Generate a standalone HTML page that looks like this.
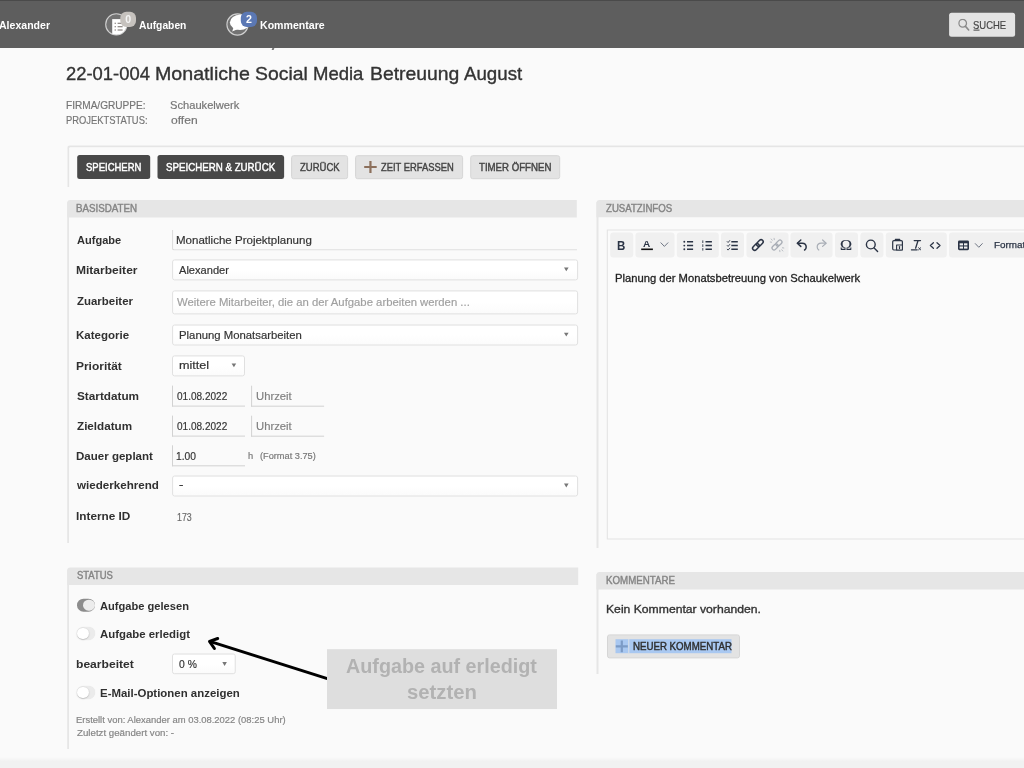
<!DOCTYPE html>
<html lang="de">
<head>
<meta charset="utf-8">
<title>Aufgabe bearbeiten</title>
<style>
html,body{margin:0;padding:0}
body{width:1024px;height:768px;overflow:hidden;position:relative;background:#fafafa;font-family:"Liberation Sans",sans-serif;color:#333}
h1{margin:0;font-weight:400;font-size:18.6px}
.t{position:absolute;white-space:nowrap;line-height:normal;transform-origin:0 0;display:block}
.abs{position:absolute}
#topbar{position:absolute;left:0;top:0;width:1024px;height:47.5px;background:#5e5e5e;box-shadow:inset 0 1px 0 #4a4a4a}
.hdr{position:absolute;background:#e6e6e6}
.vline{position:absolute;background:#e6e6e6}
.btn{position:absolute;box-sizing:border-box;border-radius:2px}
.btn.dark{background:#484848;border-radius:2.5px}
.btn.light{background:#e3e3e3;border:1px solid #d6d6d6;border-radius:2.5px}
.sel{position:absolute;box-sizing:border-box;background:linear-gradient(#fff,#fff 50%,#fbfbfb);border:1px solid #e0e0e0;border-radius:2.5px}
.inp{position:absolute;box-sizing:border-box;border-left:1px solid #d2d2d2;border-bottom:1px solid #d2d2d2}
.tri{position:absolute;width:0;height:0;border-left:2.3px solid transparent;border-right:2.3px solid transparent;border-top:3.7px solid #7a7a7a}
.tog{position:absolute;border-radius:6.5px;box-sizing:border-box}
.tog.on{background:#8c8c8c}
.tog.off{background:#ebebeb;box-shadow:0 0 1px rgba(0,0,0,.12)}
.tog i{position:absolute;top:0.7px;width:11.6px;height:11.6px;border-radius:50%;background:#fff;box-shadow:0 0.5px 1.5px rgba(0,0,0,.3)}
.tog.on i{right:0.6px;background:#ececec;box-shadow:none}
.tog.off i{left:0.4px}
.grp{position:absolute;background:#f0f0f0;border-radius:3px}
#app{position:absolute;left:0;top:0;width:1024px;height:768px;overflow:hidden;will-change:transform}

</style>
</head>
<body>
<div id="app">
<header id="topbar">
<span class="t" style="left:-1.48px;top:18.00px;font-size:11.8px;font-weight:700;color:#fff;transform:scaleX(0.8945)">Alexander</span>
<svg class="abs" style="left:100px;top:4px" width="48" height="40" viewBox="100 4 48 40">
<defs><clipPath id="c1"><circle cx="116.3" cy="24.4" r="10.4"/></clipPath></defs>
<circle cx="116.3" cy="24.4" r="10.6" fill="#737373" stroke="#cfcfcf" stroke-width="1.1"/>
<g clip-path="url(#c1)"><rect x="112.2" y="19.1" width="16" height="20" fill="#fff"/>
<g fill="#8a8480"><rect x="114.6" y="22.7" width="1.3" height="1.2"/><rect x="117.6" y="22.7" width="5" height="1.2"/>
<rect x="114.6" y="26.1" width="1.3" height="1.2"/><rect x="117.6" y="26.1" width="5" height="1.2"/>
<rect x="114.6" y="29.4" width="1.3" height="1.2"/><rect x="117.6" y="29.4" width="5" height="1.2"/></g></g>
<rect x="120.3" y="11.8" width="15.7" height="15.1" rx="6" fill="#c6c2be"/>
<text x="128.1" y="23" font-size="10.6" font-weight="700" fill="#f4f4f4" text-anchor="middle" font-family="Liberation Sans, sans-serif">0</text>
</svg>
<span class="t" style="left:138.94px;top:18.00px;font-size:11.8px;font-weight:700;color:#fff;transform:scaleX(0.8712)">Aufgaben</span>
<svg class="abs" style="left:220px;top:4px" width="48" height="40" viewBox="220 4 48 40">
<defs><clipPath id="c2"><circle cx="237.5" cy="24.5" r="10.4"/></clipPath></defs>
<circle cx="237.5" cy="24.5" r="10.6" fill="#737373" stroke="#cfcfcf" stroke-width="1.1"/>
<g clip-path="url(#c2)" fill="#fff"><ellipse cx="240" cy="22.4" rx="10.1" ry="7.7"/><path d="M233.5 27.5 L232.2 31.6 L238 29 Z"/></g>
<rect x="240.8" y="11.8" width="16.2" height="15.2" rx="6" fill="#5b78b4"/>
<text x="248.9" y="23" font-size="10.6" font-weight="700" fill="#fff" text-anchor="middle" font-family="Liberation Sans, sans-serif">2</text>
</svg>
<span class="t" style="left:260.00px;top:18.00px;font-size:11.8px;font-weight:700;color:#fff;transform:scaleX(0.8978)">Kommentare</span>
<div class="btn" style="left:949px;top:12px;width:66px;height:24px;transform:translate(0.1px,0.65px);background:#e4e4e4;border-radius:2.5px"><svg class="abs" style="left:9px;top:6px" width="12" height="13" viewBox="0 0 12 13"><circle cx="4.6" cy="4.6" r="3.8" fill="none" stroke="#8a8a8a" stroke-width="1.3"/><path d="M7.4 7.7 L10.6 11.3" stroke="#8a8a8a" stroke-width="1.6" stroke-linecap="round"/></svg></div>
<span class="t" style="left:972.56px;top:19.00px;font-size:11px;font-weight:400;color:#444;transform:scaleX(0.8604);-webkit-text-stroke:0.18px">SUCHE</span>
<div class="abs" style="left:973px;top:29px;width:6px;height:1px;transform:translate(0.5px,0.6px);background:#444"></div>
</header>
<div class="abs" style="left:271.6px;top:47.5px;width:1.6px;height:2px;background:#777;transform:skewX(-20deg)"></div>
<main>
<h1>
<span class="t" style="left:65.94px;top:63.00px;font-size:18.6px;font-weight:400;color:#333;transform:scaleX(0.9897);-webkit-text-stroke:0.35px #333">22-01-004 </span>
<span class="t" style="left:154.52px;top:63.00px;font-size:18.6px;font-weight:400;color:#333;transform:scaleX(1.0558);-webkit-text-stroke:0.35px #333">Monatliche </span>
<span class="t" style="left:254.51px;top:63.00px;font-size:18.6px;font-weight:400;color:#333;transform:scaleX(1.0419);-webkit-text-stroke:0.35px #333">Social </span>
<span class="t" style="left:312.53px;top:63.00px;font-size:18.6px;font-weight:400;color:#333;transform:scaleX(0.9953);-webkit-text-stroke:0.35px #333">Media </span>
<span class="t" style="left:369.62px;top:63.00px;font-size:18.6px;font-weight:400;color:#333;transform:scaleX(1.0415);-webkit-text-stroke:0.35px #333">Betreuung </span>
<span class="t" style="left:463.52px;top:63.00px;font-size:18.6px;font-weight:400;color:#333;transform:scaleX(1.0047);-webkit-text-stroke:0.35px #333">August</span>
</h1>
<span class="t" style="left:65.94px;top:99.00px;font-size:10.7px;font-weight:400;color:#757575;transform:scaleX(0.9430);-webkit-text-stroke:0.18px">FIRMA/GRUPPE:</span>
<span class="t" style="left:170.35px;top:99.00px;font-size:10.9px;font-weight:400;color:#757575;transform:scaleX(1.0227);-webkit-text-stroke:0.18px">Schaukelwerk</span>
<span class="t" style="left:66.06px;top:114.00px;font-size:10.7px;font-weight:400;color:#757575;transform:scaleX(0.8781);-webkit-text-stroke:0.18px">PROJEKTSTATUS:</span>
<span class="t" style="left:170.55px;top:114.00px;font-size:10.9px;font-weight:400;color:#757575;transform:scaleX(1.1088);-webkit-text-stroke:0.18px">offen</span>
<div class="abs" style="left:67px;top:145px;width:960px;height:42px;transform:translate(0.2px,0.2px);border-left:2px solid #e5e5e5;border-top:2px solid #e5e5e5;box-sizing:border-box;border-radius:3px 0 0 0"></div>
<div class="btn dark" style="left:77px;top:155px;width:73px;height:24px;transform:translate(0.2px,0.1px)"></div>
<span class="t" style="left:85.58px;top:161.00px;font-size:10.8px;font-weight:400;color:#fff;transform:scaleX(0.8790);-webkit-text-stroke:0.45px">SPEICHERN</span>
<div class="btn dark" style="left:157px;top:155px;width:127px;height:24px;transform:translate(0.5px,0.1px);transform-origin:0 0;transform:translate(0.5px,0.1px) scaleX(0.997)"></div>
<span class="t" style="left:165.54px;top:161.00px;font-size:10.8px;font-weight:400;color:#fff;transform:scaleX(0.9008);-webkit-text-stroke:0.45px">SPEICHERN &amp; ZURÜCK</span>
<div class="btn light" style="left:291px;top:155px;width:57px;height:24px;transform:translate(0.1px,0.2px)"></div>
<span class="t" style="left:299.68px;top:161.00px;font-size:10.8px;font-weight:400;color:#444;transform:scaleX(0.8807);-webkit-text-stroke:0.42px">ZURÜCK</span>
<div class="btn light" style="left:355px;top:155px;width:108px;height:24px;transform:translate(0.1px,0.2px)"></div>
<svg class="abs" style="left:364px;top:160px" width="14" height="14" viewBox="364 160 14 14"><path d="M370.45 161V173M364.2 167H376.7" stroke="#8c705c" stroke-width="2.2"/></svg>
<span class="t" style="left:380.67px;top:161.00px;font-size:10.8px;font-weight:400;color:#444;transform:scaleX(0.8675);-webkit-text-stroke:0.42px">ZEIT ERFASSEN</span>
<div class="btn light" style="left:470px;top:155px;width:90px;height:24px;transform:translate(0.2px,0.2px)"></div>
<span class="t" style="left:478.50px;top:161.00px;font-size:10.8px;font-weight:400;color:#444;transform:scaleX(0.8942);-webkit-text-stroke:0.42px">TIMER ÖFFNEN</span>
<section>
<div class="hdr" style="left:67px;top:200px;width:510px;height:17px;transform:translate(0.2px,0px);border-radius:3px 0 0 0;transform-origin:0 0;transform:translate(0.2px,0px) scale(0.9992,1.0235)"></div>
<div class="vline" style="left:67px;top:202px;width:2px;height:341px;transform:translate(0.2px,0px);transform-origin:0 0;transform:translate(0.2px,0px) scaleX(0.9)"></div>
<span class="t" style="left:76.14px;top:202.00px;font-size:10.6px;font-weight:400;color:#858585;transform:scaleX(0.9219);-webkit-text-stroke:0.42px">BASISDATEN</span>
<span class="t" style="left:76.62px;top:233.00px;font-size:11.8px;font-weight:700;color:#303030;transform:scaleX(0.9358)">Aufgabe</span>
<div class="inp" style="left:172px;top:229px;width:405px;height:21px;transform:translate(0.1px,0.6px);border-radius:0 0 0 2px"></div>
<span class="t" style="left:175.54px;top:234.00px;font-size:11.1px;font-weight:400;color:#333;transform:scaleX(1.0390);-webkit-text-stroke:0.18px">Monatliche Projektplanung</span>
<span class="t" style="left:75.79px;top:263.00px;font-size:11.8px;font-weight:700;color:#303030;transform:scaleX(1.0198)">Mitarbeiter</span>
<div class="sel" style="left:172px;top:259px;width:405.5px;height:21px;transform:translate(0.1px,0.4px)"></div>
<span class="t" style="left:178.91px;top:264.00px;font-size:11.1px;font-weight:400;color:#333;transform:scaleX(1.0001);-webkit-text-stroke:0.18px">Alexander</span>
<svg class="abs" style="left:564px;top:267px" width="8" height="8" viewBox="0 0 8 8"><path d="M0.00 0.50 h4.6 l-2.3 3.8z" fill="#777"/></svg>
<span class="t" style="left:76.64px;top:294.00px;font-size:11.8px;font-weight:700;color:#303030;transform:scaleX(0.9699)">Zuarbeiter</span>
<div class="sel" style="left:172px;top:290px;width:405.5px;height:24px;transform:translate(0.1px,0.4px)"></div>
<span class="t" style="left:176.51px;top:296.00px;font-size:11.1px;font-weight:400;color:#a0a0a0;transform:scaleX(1.0195);-webkit-text-stroke:0.18px">Weitere Mitarbeiter, die an der Aufgabe arbeiten werden ...</span>
<span class="t" style="left:75.80px;top:328.00px;font-size:11.8px;font-weight:700;color:#303030;transform:scaleX(0.9762)">Kategorie</span>
<div class="sel" style="left:172px;top:324px;width:405.5px;height:21px;transform:translate(0.1px,0.5px)"></div>
<span class="t" style="left:178.93px;top:329.00px;font-size:11.1px;font-weight:400;color:#333;transform:scaleX(1.0214);-webkit-text-stroke:0.18px">Planung Monatsarbeiten</span>
<svg class="abs" style="left:564px;top:332px" width="8" height="8" viewBox="0 0 8 8"><path d="M0.00 0.80 h4.6 l-2.3 3.8z" fill="#777"/></svg>
<span class="t" style="left:75.79px;top:359.00px;font-size:11.8px;font-weight:700;color:#303030;transform:scaleX(1.0130)">Priorität</span>
<div class="sel" style="left:172px;top:355px;width:73px;height:21px;transform:translate(0px,0.4px)"></div>
<span class="t" style="left:178.53px;top:359.00px;font-size:11.1px;font-weight:400;color:#333;transform:scaleX(1.1369);-webkit-text-stroke:0.18px">mittel</span>
<svg class="abs" style="left:231px;top:363px" width="8" height="8" viewBox="0 0 8 8"><path d="M0.60 0.40 h4.6 l-2.3 3.8z" fill="#777"/></svg>
<span class="t" style="left:76.52px;top:389.00px;font-size:11.8px;font-weight:700;color:#303030;transform:scaleX(0.9968)">Startdatum</span>
<div class="inp" style="left:172px;top:386px;width:73px;height:21px;transform:translate(0px,-0.4px)"></div>
<span class="t" style="left:176.66px;top:390.00px;font-size:11px;font-weight:400;color:#333;transform:scaleX(0.9122);-webkit-text-stroke:0.18px">01.08.2022</span>
<div class="inp" style="left:251px;top:386px;width:73px;height:21px;transform:translate(0.1px,0px);transform:translate(0.1px,-0.3px)"></div>
<span class="t" style="left:255.61px;top:390.00px;font-size:11.1px;font-weight:400;color:#808080;transform:scaleX(1.0168);-webkit-text-stroke:0.18px">Uhrzeit</span>
<span class="t" style="left:76.64px;top:419.00px;font-size:11.8px;font-weight:700;color:#303030;transform:scaleX(0.9894)">Zieldatum</span>
<div class="inp" style="left:172px;top:416px;width:73px;height:21px;transform:translate(0px,-0.4px)"></div>
<span class="t" style="left:176.66px;top:420.00px;font-size:11px;font-weight:400;color:#333;transform:scaleX(0.9122);-webkit-text-stroke:0.18px">01.08.2022</span>
<div class="inp" style="left:251px;top:416px;width:73px;height:21px;transform:translate(0.1px,0px);transform:translate(0.1px,-0.3px)"></div>
<span class="t" style="left:255.61px;top:420.00px;font-size:11.1px;font-weight:400;color:#808080;transform:scaleX(1.0168);-webkit-text-stroke:0.18px">Uhrzeit</span>
<span class="t" style="left:75.80px;top:449.00px;font-size:11.8px;font-weight:700;color:#303030;transform:scaleX(0.9780)">Dauer geplant</span>
<div class="inp" style="left:172px;top:445px;width:73px;height:21px;transform:translate(0px,0.3px)"></div>
<span class="t" style="left:175.56px;top:450.00px;font-size:11px;font-weight:400;color:#333;transform:scaleX(0.9328);-webkit-text-stroke:0.18px">1.00</span>
<span class="t" style="left:247.52px;top:450.00px;font-size:9.7px;font-weight:400;color:#777;transform:scaleX(0.9592);-webkit-text-stroke:0.18px">h</span>
<span class="t" style="left:260.03px;top:450.00px;font-size:9.7px;font-weight:400;color:#777;transform:scaleX(0.9499);-webkit-text-stroke:0.18px">(Format 3.75)</span>
<span class="t" style="left:76.50px;top:478.00px;font-size:11.8px;font-weight:700;color:#303030;transform:scaleX(0.9837)">wiederkehrend</span>
<div class="sel" style="left:172px;top:475px;width:405.5px;height:21px;transform:translate(0.1px,0.5px)"></div>
<span class="t" style="left:178.89px;top:478.00px;font-size:11.4px;font-weight:400;color:#333;transform:scaleX(1.1542);-webkit-text-stroke:0.25px">-</span>
<svg class="abs" style="left:564px;top:483px" width="8" height="8" viewBox="0 0 8 8"><path d="M0.00 0.60 h4.6 l-2.3 3.8z" fill="#777"/></svg>
<span class="t" style="left:75.79px;top:509.00px;font-size:11.8px;font-weight:700;color:#303030;transform:scaleX(0.9987)">Interne ID</span>
<span class="t" style="left:176.62px;top:511.00px;font-size:11px;font-weight:400;color:#6a6a6a;transform:scaleX(0.8033);-webkit-text-stroke:0.18px">173</span>
</section>
<section>
<div class="hdr" style="left:67px;top:567px;width:511px;height:18px;transform:translate(0.2px,0.5px);border-radius:3px 0 0 0;transform-origin:0 0;transform:translate(0.2px,0.5px) scaleY(0.97)"></div>
<div class="vline" style="left:67px;top:570px;width:2px;height:179px;transform:translate(0.2px,0px);transform-origin:0 0;transform:translate(0.2px,0px) scaleX(0.9)"></div>
<span class="t" style="left:76.52px;top:569.00px;font-size:10.6px;font-weight:400;color:#858585;transform:scaleX(0.8917);-webkit-text-stroke:0.42px">STATUS</span>
<div class="tog on" style="left:77px;top:598px;width:18.3px;height:13px;transform:translate(0px,0.7px)"><i></i></div>
<span class="t" style="left:99.82px;top:599.00px;font-size:11.8px;font-weight:700;color:#303030;transform:scaleX(0.9422)">Aufgabe gelesen</span>
<div class="tog off" style="left:77px;top:626px;width:18.3px;height:13px;transform:translate(0px,0.9px)"><i></i></div>
<span class="t" style="left:99.82px;top:627.00px;font-size:11.8px;font-weight:700;color:#303030;transform:scaleX(0.9662)">Aufgabe erledigt</span>
<span class="t" style="left:75.70px;top:657.00px;font-size:11.8px;font-weight:700;color:#303030;transform:scaleX(1.0254)">bearbeitet</span>
<div class="sel" style="left:172px;top:653px;width:64px;height:21px;transform:translate(0px,0.5px);transform-origin:0 0;transform:translate(0px,0.5px) scale(0.996,0.985)"></div>
<span class="t" style="left:178.64px;top:658.00px;font-size:11.1px;font-weight:400;color:#333;transform:scaleX(0.9323);-webkit-text-stroke:0.18px">0 %</span>
<svg class="abs" style="left:222px;top:662px" width="8" height="8" viewBox="0 0 8 8"><path d="M0.30 0.10 h4.6 l-2.3 3.8z" fill="#777"/></svg>
<div class="tog off" style="left:77px;top:685px;width:18.3px;height:13px;transform:translate(0px,0.9px)"><i></i></div>
<span class="t" style="left:99.60px;top:686.00px;font-size:11.8px;font-weight:700;color:#303030;transform:scaleX(0.9695)">E-Mail-Optionen anzeigen</span>
<span class="t" style="left:76.12px;top:714.00px;font-size:9.4px;font-weight:400;color:#858585;transform:scaleX(1.0058);-webkit-text-stroke:0.18px">Erstellt von: Alexander am 03.08.2022 (08:25 Uhr)</span>
<span class="t" style="left:76.56px;top:727.00px;font-size:9.4px;font-weight:400;color:#858585;transform:scaleX(1.0351);-webkit-text-stroke:0.18px">Zuletzt geändert von: -</span>
</section>
<svg class="abs" style="left:200px;top:630px" width="140" height="60" viewBox="200 630 140 60"><g fill="none" stroke="#000" stroke-width="3" stroke-linecap="butt" stroke-linejoin="round"><path d="M327.3 678.6 L209.8 641.4"/><path d="M217.7 638.5 L209.5 641.3 L214.4 648.5" stroke-linecap="round"/></g></svg>
<div class="abs" style="left:327px;top:649px;width:230px;height:60px;transform:translate(0px,0.2px);background:#dedede"></div>
<span class="t" style="left:345.91px;top:655.00px;font-size:20px;font-weight:700;color:#b2b2b2;transform:scaleX(0.9869)">Aufgabe auf erledigt</span>
<span class="t" style="left:406.50px;top:681.00px;font-size:20px;font-weight:700;color:#b2b2b2;transform:scaleX(1.0142)">setzten</span>
<section>
<div class="hdr" style="left:596px;top:199px;width:430px;height:17px;transform:translate(0.5px,0.9px);border-radius:3px 0 0 0;transform-origin:0 0;transform:translate(0.5px,0.9px) scaleY(1.0235)"></div>
<div class="vline" style="left:596px;top:202px;width:2px;height:345.5px;transform:translate(0.5px,0px)"></div>
<span class="t" style="left:605.67px;top:202.00px;font-size:10.6px;font-weight:400;color:#858585;transform:scaleX(0.9087);-webkit-text-stroke:0.42px">ZUSATZINFOS</span>
<div class="abs" style="left:606px;top:229px;width:430px;height:310px;transform:translate(0.8px,0.5px);box-sizing:border-box;border:1px solid #e3e3e3;background:#fbfbfb"></div>
<div class="grp" style="left:610px;top:232px;width:23px;height:25px;transform:translate(0.2px,0.6px)"></div>
<div class="grp" style="left:635px;top:232px;width:39px;height:25px;transform:translate(0.5px,0.6px)"></div>
<div class="grp" style="left:676px;top:232px;width:42px;height:25px;transform:translate(0.8px,0.6px)"></div>
<div class="grp" style="left:721px;top:232px;width:23px;height:25px;transform:translate(0px,0.6px)"></div>
<div class="grp" style="left:746px;top:232px;width:42px;height:25px;transform:translate(0.5px,0.6px)"></div>
<div class="grp" style="left:790px;top:232px;width:42px;height:25px;transform:translate(0.5px,0.6px)"></div>
<div class="grp" style="left:835px;top:232px;width:23px;height:25px;transform:translate(0px,0.6px)"></div>
<div class="grp" style="left:860px;top:232px;width:23px;height:25px;transform:translate(0.4px,0.6px)"></div>
<div class="grp" style="left:885px;top:232px;width:61px;height:25px;transform:translate(0.8px,0.6px)"></div>
<div class="grp" style="left:949px;top:232px;width:81px;height:25px;transform:translate(0px,0.6px)"></div>
<svg class="abs" style="left:606px;top:228px" width="418" height="34" viewBox="606 228 418 34" fill="none" stroke-linecap="round" stroke-linejoin="round">
<g stroke="#2b3445">
<!-- A underline colour -->
<path d="M641.2 249.3H652.9" stroke="#111" stroke-width="1.6" stroke-linecap="butt"/>
<path d="M660.9 242.8 L664.4 246.4 L667.9 242.8" stroke="#6f7684" stroke-width="1"/>
<!-- bullet list -->
<g stroke-width="1.5" stroke-linecap="butt"><path d="M687 241.7H693.1M687 245.6H693.1M687 249.3H693.1"/></g>
<g fill="#2b3445" stroke="none"><circle cx="684.3" cy="241.7" r="0.95"/><circle cx="684.3" cy="245.6" r="0.95"/><circle cx="684.3" cy="249.3" r="0.95"/></g>
<!-- numbered list -->
<g stroke-width="1.5" stroke-linecap="butt"><path d="M705.5 241.7H711.9M705.5 245.6H711.9M705.5 249.3H711.9"/></g>
<g stroke-width="0.9" stroke-linecap="butt"><path d="M702.8 240.4V243M702.8 244.3V246.9M702.8 248.1V250.6"/></g>
<!-- check list -->
<g stroke-width="1.5" stroke-linecap="butt"><path d="M731.3 241.7H737.8M731.3 245.6H737.8M731.3 249.3H737.8"/></g>
<g stroke-width="0.9"><path d="M727.2 241.6l0.9 0.9 1.7-2M727.2 245.5l0.9 0.9 1.7-2M727.2 249.2l0.9 0.9 1.7-2"/></g>
<!-- link -->
<g stroke-width="1.5" transform="translate(757.9 245) rotate(-45)"><rect x="-6.6" y="-2.1" width="7.6" height="4.2" rx="2.1"/><rect x="-1" y="-2.1" width="7.6" height="4.2" rx="2.1"/></g>
<!-- unlink (disabled) -->
<g stroke="#a9aeb6"><g stroke-width="1.3" transform="translate(777 245) rotate(-45)"><rect x="-6.2" y="-2" width="7" height="4" rx="2"/><rect x="-0.8" y="-2" width="7" height="4" rx="2"/></g>
<g stroke-width="0.8"><path d="M772.2 240.2l-1-1.2M774.3 239.7l-0.2-1.4M771.6 242.2l-1.4-0.2M781.8 249.8l1 1.2M779.7 250.3l0.2 1.4M782.4 247.8l1.4 0.2"/></g></g>
<!-- undo -->
<g stroke-width="1.5"><path d="M800.8 240 L797.3 243.2 L800.8 246.4"/><path d="M797.6 243.2 H802.2 Q806.2 243.4 806.2 247 Q806.2 249 804.6 250"/></g>
<!-- redo (disabled) -->
<g stroke="#a9aeb6" stroke-width="1.2"><path d="M822.6 240 L826.1 243.2 L822.6 246.4"/><path d="M825.8 243.2 H821.2 Q817.2 243.4 817.2 247 Q817.2 249 818.8 250"/></g>
<!-- search -->
<circle cx="870.8" cy="244.5" r="4.4" stroke-width="1.4"/><path d="M874.1 247.9 L877.6 251.4" stroke-width="1.4"/>
<!-- paste -->
<g stroke-width="1.2"><rect x="892.7" y="240.6" width="9.7" height="9.4" rx="1.2"/><path d="M895.4 240.4 V239.5 H899.7 V240.4" stroke-width="1.3"/><rect x="896.6" y="245" width="5.8" height="5" fill="#f0f0f0" stroke-width="1.1"/><path d="M899.5 246.6V248.6" stroke-width="1.2"/></g>
<!-- clear format Tx -->
<g stroke-width="1.3"><path d="M914.2 240.6H920.5M918 240.8L915.6 248.2" /><path d="M911.4 249.8H917.2" stroke-width="1.2"/><path d="M918.6 247.8l2 2M920.6 247.8l-2 2" stroke-width="1"/></g>
<!-- source <> -->
<g stroke-width="1.3"><path d="M933.4 242.8 L930.4 245.5 L933.4 248.2M937 242.8 L940 245.5 L937 248.2"/></g>
<!-- table -->
<rect x="958" y="240.4" width="11" height="9.8" rx="1.4" fill="#2b3445" stroke="none"/>
<g fill="#f0f0f0" stroke="none"><rect x="959.6" y="243.3" width="3.4" height="2.1"/><rect x="964" y="243.3" width="3.4" height="2.1"/><rect x="959.6" y="246.5" width="3.4" height="2.1"/><rect x="964" y="246.5" width="3.4" height="2.1"/></g>
<path d="M975.3 243.6 L978.8 247.3 L982.3 243.6" stroke="#6f7684" stroke-width="1"/>
</g>
</svg>

<span class="t" style="left:616.80px;top:239.00px;font-size:12.6px;font-weight:700;color:#2b3445;transform:scaleX(0.9148)">B</span>
<span class="t" style="left:642.80px;top:239.00px;font-size:8.6px;font-weight:700;color:#2b3445;transform:scaleX(1.1692)">A</span>
<span class="t" style="left:839.68px;top:237.00px;font-size:14.2px;font-weight:400;color:#2b3445;transform:scaleX(1.1423);-webkit-text-stroke:0.18px;font-family:'Liberation Serif',serif">Ω</span>
<span class="t" style="left:993.62px;top:239.00px;font-size:9.5px;font-weight:400;color:#2b3445;transform:scaleX(1.0400);-webkit-text-stroke:0.25px">Format</span>
<span class="t" style="left:614.51px;top:272.00px;font-size:11.4px;font-weight:400;color:#222;transform:scaleX(0.9849);-webkit-text-stroke:0.3px #222">Planung der Monatsbetreuung von Schaukelwerk</span>
</section>
<section>
<div class="hdr" style="left:596px;top:572px;width:430px;height:18px;transform:translate(0.5px,0px);border-radius:3px 0 0 0;transform-origin:0 0;transform:translate(0.5px,0px) scaleY(0.97)"></div>
<div class="vline" style="left:596px;top:574px;width:2px;height:100px;transform:translate(0.5px,0px)"></div>
<span class="t" style="left:605.51px;top:574.00px;font-size:10.6px;font-weight:400;color:#858585;transform:scaleX(0.9173);-webkit-text-stroke:0.42px">KOMMENTARE</span>
<span class="t" style="left:605.84px;top:602.00px;font-size:11.6px;font-weight:400;color:#333;transform:scaleX(1.0497);-webkit-text-stroke:0.35px">Kein Kommentar vorhanden.</span>
<div class="btn light" style="left:607px;top:634px;width:133px;height:24px;transform:translate(0px,0.4px)"></div>
<div class="abs" style="left:615px;top:639px;width:116px;height:14px;transform:translate(0.5px,0.2px);background:#a9c8f1"></div>
<div class="abs" style="left:628px;top:639px;width:1px;height:14px;transform:translate(0.3px,0.2px);background:#dfe2e6"></div>
<svg class="abs" style="left:615px;top:639px" width="14" height="14" viewBox="615 639 14 14"><path d="M621.8 640.4V652.2M615.8 646.3H627.8" stroke="#7c9bc6" stroke-width="2.2"/></svg>
<span class="t" style="left:632.53px;top:640.00px;font-size:10.8px;font-weight:400;color:#2e2e2e;transform:scaleX(0.8975);-webkit-text-stroke:0.42px">NEUER KOMMENTAR</span>
</section>
</main>
<div class="abs" style="left:0;top:757px;width:1024px;height:11px;background:linear-gradient(#fafafa,#f1f1f1 40%)"></div>
</div>
</body>
</html>
